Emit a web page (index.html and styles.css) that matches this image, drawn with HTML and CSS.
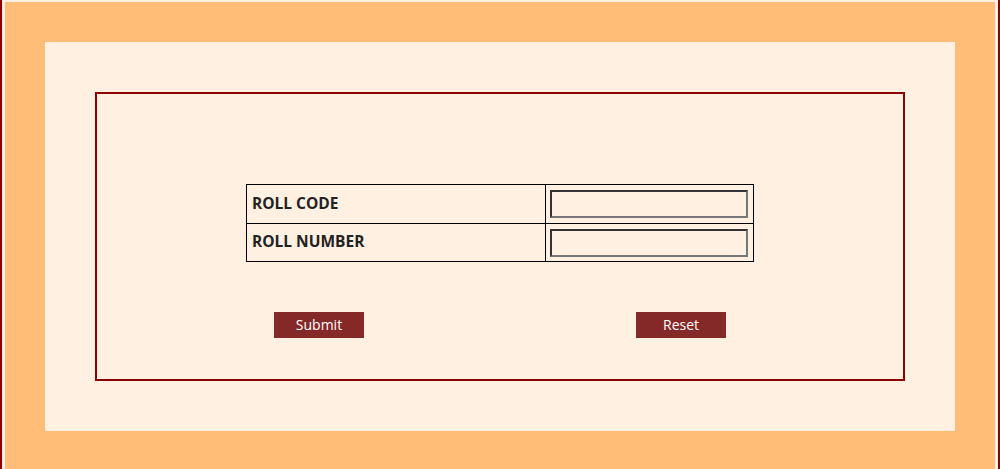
FILE: index.html
```html
<!DOCTYPE html>
<html>
<head>
<meta charset="utf-8">
<link rel="stylesheet" href="styles.css">
</head>
<body>
<div class="page">
  <div class="outer">
    <div class="inner">
      <div class="frame">
        <table class="form-table">
          <tr class="row-a">
            <td class="label">ROLL CODE</td>
            <td class="field"><input type="text" class="box"></td>
          </tr>
          <tr class="row-b">
            <td class="label">ROLL NUMBER</td>
            <td class="field"><input type="text" class="box"></td>
          </tr>
        </table>
        <div class="actions">
          <button class="btn">Submit</button>
          <button class="btn">Reset</button>
        </div>
      </div>
    </div>
  </div>
</div>
</body>
</html>
```
FILE: styles.css
```css
html, body {
  margin: 0;
  padding: 0;
  overflow: hidden;
  background: #fff0e1;
}
.page {
  border-left: 2px solid #8b0000;
  border-right: 2px solid #8b0000;
  padding: 2px 3px 0 3px;
  height: 467px;
  box-sizing: content-box;
}
.outer {
  background: #ffbd78;
  padding: 40px 40px 39px 40px;
}
.inner {
  background: #fff0e1;
  height: 389px;
  padding: 50px 50px 50px 50px;
  box-sizing: border-box;
}
.frame {
  border: 2px solid #8b0000;
  height: 289px;
  box-sizing: border-box;
  padding-top: 90px;
}
.form-table {
  border-collapse: collapse;
  margin: 0 auto;
  width: 508px;
}
.form-table td {
  border: 1px solid #000;
  padding: 0;
}
.row-a td {
  height: 38px;
}
.row-b td {
  height: 37px;
}
.row-a td.label {
  height: 35px;
}
.row-b td.label {
  height: 34px;
}
.label {
  font-family: "Open Sans", "Noto Sans", sans-serif;
  font-weight: bold;
  font-size: 15.5px;
  color: #222;
  padding: 0 0 3px 5px !important;
  width: 293px;
  vertical-align: middle;
}
.field {
  padding: 0 4px 0 4px !important;
  vertical-align: top;
}
.box {
  display: block;
  width: 198px;
  height: 28px;
  box-sizing: border-box;
  border: 2px solid;
  border-top-color: #333;
  border-left-color: #333;
  border-right-color: #777;
  border-bottom-color: #777;
  background: transparent;
  margin: 5px 0 0 0;
  padding: 0;
}
.actions {
  display: flex;
  justify-content: center;
  gap: 272px;
  margin-top: 50px;
}
.btn {
  width: 90px;
  height: 26px;
  background: #852828;
  color: #fff;
  border: none;
  font-family: "Open Sans", "Noto Sans", sans-serif;
  font-size: 14px;
  padding: 0 0 1px 0;
  margin: 0;
}
```
